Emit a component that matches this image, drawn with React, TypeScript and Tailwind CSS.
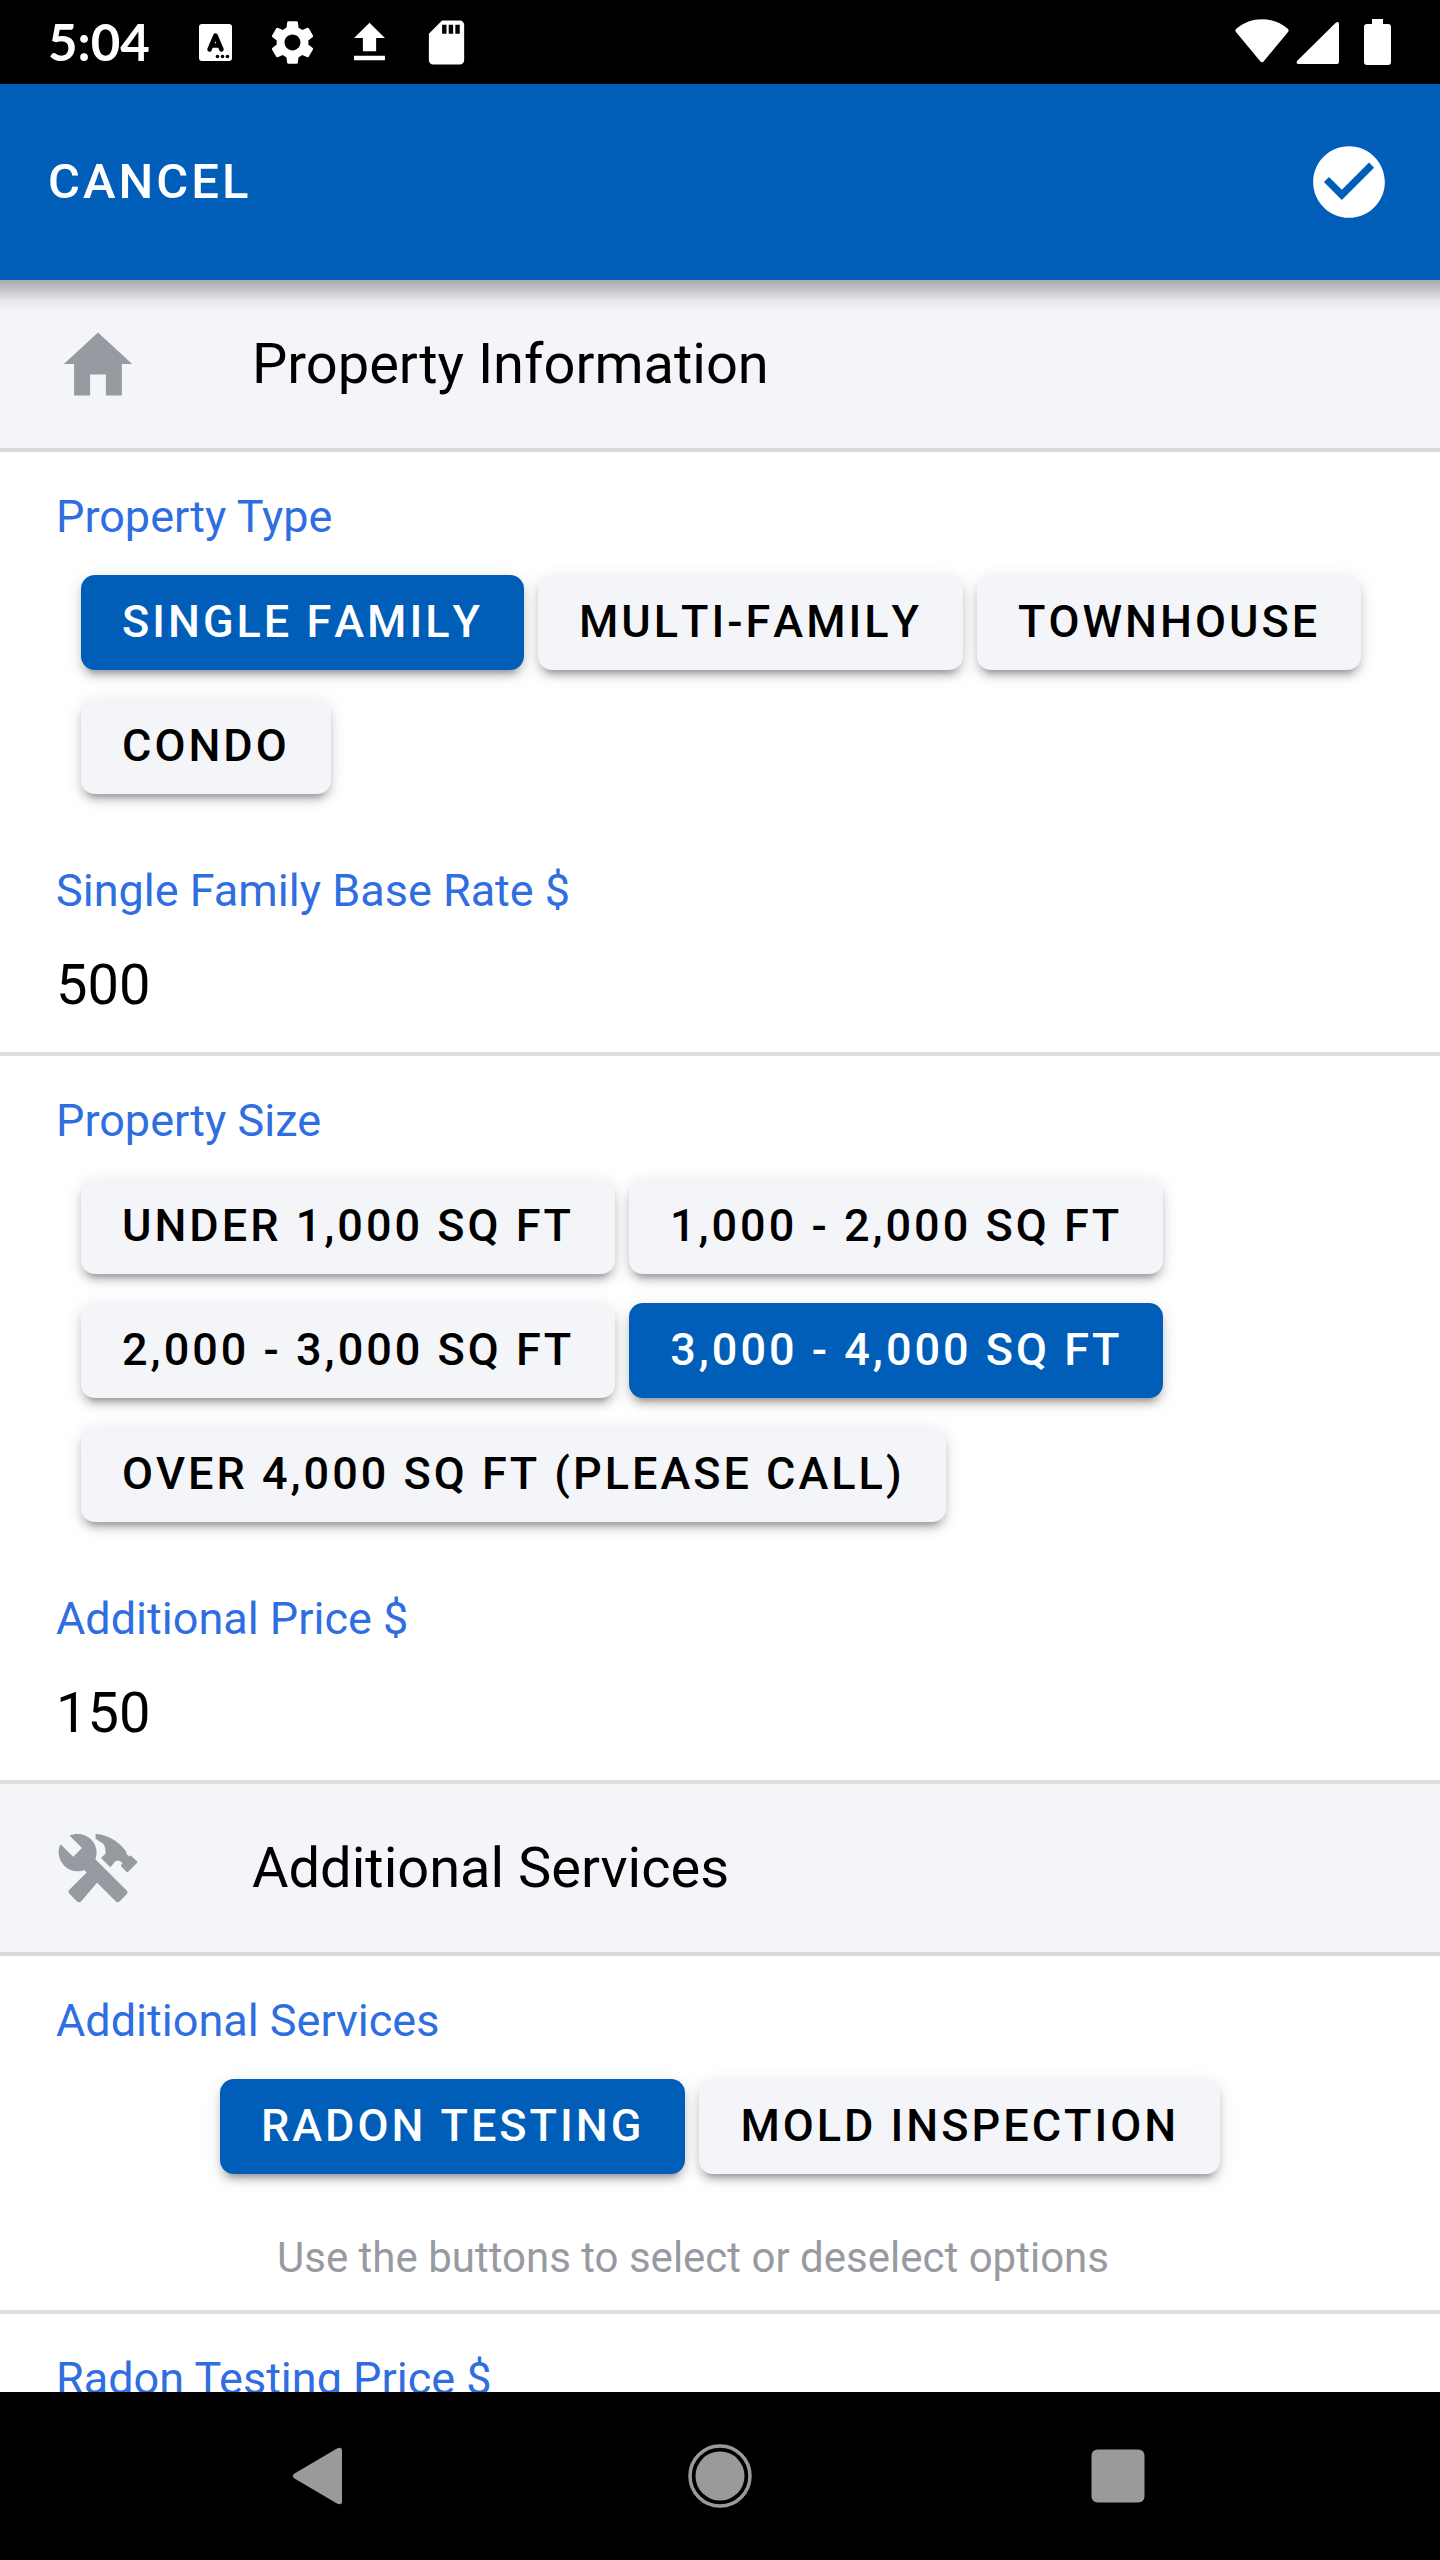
import { useState } from 'react';
import type { ReactNode } from 'react';
import clsx from 'clsx';
import { IoMdConstruct, IoMdHome } from 'react-icons/io';
import { MdCheckCircle, MdSdCard, MdSettings, MdUpload } from 'react-icons/md';

const PROPERTY_TYPES = ['Single Family', 'Multi-Family', 'Townhouse', 'Condo'];

const PROPERTY_SIZES = [
  'Under 1,000 sq ft',
  '1,000 - 2,000 sq ft',
  '2,000 - 3,000 sq ft',
  '3,000 - 4,000 sq ft',
  'Over 4,000 sq ft (please call)',
];

const SERVICES = ['Radon Testing', 'Mold Inspection'];

function StatusBar() {
  return (
    <div className="flex h-[84px] shrink-0 items-center justify-between bg-black px-12 text-white">
      <div className="flex items-center">
        <span className="w-[141px] font-[Lato,sans-serif] text-[51px] leading-[56px] font-bold">5:04</span>
        <div className="flex items-center gap-6">
          <svg viewBox="0 0 53 53" className="size-[53px]" aria-hidden="true">
            <rect x="10" y="8" width="33" height="37" rx="3" fill="currentColor" />
            <path d="M20.500 33.500 26.500 19.500 32.500 33.500M22.500 29.500h8" fill="none" stroke="#000" strokeWidth="4.500" strokeLinecap="round" strokeLinejoin="round" />
            <circle cx="28.500" cy="40.500" r="1.800" />
            <circle cx="33.500" cy="40.500" r="1.800" />
            <circle cx="38.500" cy="40.500" r="1.800" />
          </svg>
          <MdSettings className="size-[53px]" />
          <MdUpload className="size-[53px]" />
          <MdSdCard className="size-[53px]" />
        </div>
      </div>
      <div className="flex items-center">
        <svg viewBox="0 0 56 46" className="h-[46px] w-14" aria-hidden="true">
          <path d="M2.500 9.500C17-3 39-3 53.500 9.500q2 1.500.5 3.500L30 42q-2 2.500-4 0L2 13q-1.500-2 .5-3.500z" fill="currentColor" />
        </svg>
        <svg viewBox="0 0 56 46" className="h-[46px] w-14" aria-hidden="true">
          <path d="M7.500 41.500 45.500 4Q49 1.500 49 5v38q0 2-2 2H9q-4 0-1.500-3.500z" fill="currentColor" />
        </svg>
        <svg viewBox="0 0 46 46" className="size-[46px]" aria-hidden="true">
          <path d="M26 0h11v5h5q3 0 3 3v35q0 3-3 3H21q-3 0-3-3V8q0-3 3-3h5z" fill="currentColor" />
        </svg>
      </div>
    </div>
  );
}

function SectionHeader({ icon, title }: { icon: ReactNode; title: string }) {
  return (
    <div className="flex h-[172px] items-center gap-28 border-b-4 border-[#d7d8da] bg-[#f4f5f8] px-14">
      <span className="shrink-0 text-[#989aa2]">{icon}</span>
      <h2 className="text-[56px] leading-[68px]">{title}</h2>
    </div>
  );
}

interface ChoiceGroupProps {
  label: string;
  options: string[];
  selected: string[];
  onSelect: (option: string) => void;
  centered?: boolean;
}

function ChoiceGroup({ label, options, selected, onSelect, centered }: ChoiceGroupProps) {
  return (
    <div role="group" aria-label={label}>
      <div className="px-14 text-[45px] leading-[56px] text-[#2f6ee0]">{label}</div>
      <div className={clsx('mt-[30px] flex flex-wrap gap-x-3.5 gap-y-[29px] px-[60px]', centered ? 'justify-center' : 'pl-[81px]')}>
        {options.map((option) => {
          const active = selected.includes(option);
          return (
            <button
              key={option}
              type="button"
              aria-pressed={active}
              onClick={() => onSelect(option)}
              className={clsx(
                'h-[95px] rounded-[14px] px-[41px] pb-0.5 text-[45px] leading-[56px] font-medium tracking-[3px] uppercase [font-kerning:none]',
                'shadow-[0_10px_4px_-7px_rgba(0,0,0,0.2),0_7px_7px_0_rgba(0,0,0,0.14),0_4px_18px_0_rgba(0,0,0,0.12)]',
                active ? 'bg-[#005eb8] text-white' : 'bg-[#f4f5f8] text-black',
              )}
            >
              {option}
            </button>
          );
        })}
      </div>
    </div>
  );
}

interface PriceFieldProps {
  id: string;
  label: string;
  value: string;
  onChange: (value: string) => void;
}

function PriceField({ id, label, value, onChange }: PriceFieldProps) {
  return (
    <div className="px-14">
      <label htmlFor={id} className="block text-[45px] leading-[56px] text-[#2f6ee0]">
        {label}
      </label>
      <input
        id={id}
        inputMode="numeric"
        value={value}
        onChange={(e) => onChange(e.target.value)}
        className="mt-8 block h-[68px] w-full bg-transparent text-[56px] leading-[68px] outline-none"
      />
    </div>
  );
}

function NavigationBar() {
  return (
    <nav className="flex h-[168px] shrink-0 items-center bg-black px-[123px] text-[#9a9a9a]">
      <button type="button" aria-label="Back" className="flex flex-1 justify-center">
        <svg viewBox="0 0 64 64" className="size-16" aria-hidden="true">
          <path d="M4.500 29.500 47 4.500Q52 2 52 7v50q0 5-5 2.500L4.500 34.500q-3.500-2.500 0-5z" fill="currentColor" />
        </svg>
      </button>
      <button type="button" aria-label="Home" className="flex flex-1 justify-center">
        <svg viewBox="0 0 64 64" className="size-16" aria-hidden="true">
          <circle cx="32" cy="32" r="30" fill="none" stroke="currentColor" strokeWidth="3.500" />
          <circle cx="32" cy="32" r="24.500" fill="currentColor" />
        </svg>
      </button>
      <button type="button" aria-label="Overview" className="flex flex-1 justify-center">
        <svg viewBox="0 0 64 64" className="size-16" aria-hidden="true">
          <rect x="5.500" y="5.500" width="53" height="53" rx="6" fill="currentColor" />
        </svg>
      </button>
    </nav>
  );
}

export default function App() {
  const [propertyType, setPropertyType] = useState('Single Family');
  const [propertySize, setPropertySize] = useState('3,000 - 4,000 sq ft');
  const [services, setServices] = useState(['Radon Testing']);
  const [baseRate, setBaseRate] = useState('500');
  const [additionalPrice, setAdditionalPrice] = useState('150');
  const [radonPrice, setRadonPrice] = useState('125');

  const toggleService = (service: string) => {
    setServices((prev) => (prev.includes(service) ? prev.filter((s) => s !== service) : [...prev, service]));
  };

  return (
    <div className="flex h-screen flex-col bg-white font-[Roboto,sans-serif] text-black">
      <StatusBar />

      <header className="relative z-10 flex h-[196px] shrink-0 items-center justify-between bg-[#005eb8] px-12 text-white">
        <button type="button" className="text-[49px] leading-[56px] font-medium tracking-[3px] uppercase">
          Cancel
        </button>
        <button type="button" aria-label="Done">
          <MdCheckCircle className="size-[86px]" />
        </button>
        <div className="pointer-events-none absolute inset-x-0 top-full h-8 bg-[linear-gradient(rgba(0,0,0,0.3),rgba(0,0,0,0.22)_25%,rgba(0,0,0,0.06)_65%,transparent)]" />
      </header>

      <main className="min-h-0 flex-1 overflow-y-auto [scrollbar-width:none]">
        <SectionHeader icon={<IoMdHome className="size-[84px]" />} title="Property Information" />

        <section className="flex flex-col gap-[69px] border-b-4 border-[#dedede] pt-[37px] pb-[33px]">
          <ChoiceGroup
            label="Property Type"
            options={PROPERTY_TYPES}
            selected={[propertyType]}
            onSelect={setPropertyType}
          />
          <PriceField id="base-rate" label={`${propertyType} Base Rate $`} value={baseRate} onChange={setBaseRate} />
        </section>

        <section className="flex flex-col gap-[69px] border-b-4 border-[#dedede] pt-[37px] pb-[33px]">
          <ChoiceGroup
            label="Property Size"
            options={PROPERTY_SIZES}
            selected={[propertySize]}
            onSelect={setPropertySize}
          />
          <PriceField
            id="additional-price"
            label="Additional Price $"
            value={additionalPrice}
            onChange={setAdditionalPrice}
          />
        </section>

        <SectionHeader icon={<IoMdConstruct className="size-[84px]" />} title="Additional Services" />

        <section className="border-b-4 border-[#dedede] pt-[37px] pb-[26px]">
          <ChoiceGroup
            label="Additional Services"
            options={SERVICES}
            selected={services}
            onSelect={toggleService}
            centered
          />
          <p className="mt-[58px] pr-[54px] text-center text-[42px] leading-[52px] text-[#989aa2]">
            Use the buttons to select or deselect options
          </p>
        </section>

        {services.includes('Radon Testing') && (
          <section className="pt-[37px] pb-[33px]">
            <PriceField id="radon-price" label="Radon Testing Price $" value={radonPrice} onChange={setRadonPrice} />
          </section>
        )}
      </main>

      <NavigationBar />
    </div>
  );
}
